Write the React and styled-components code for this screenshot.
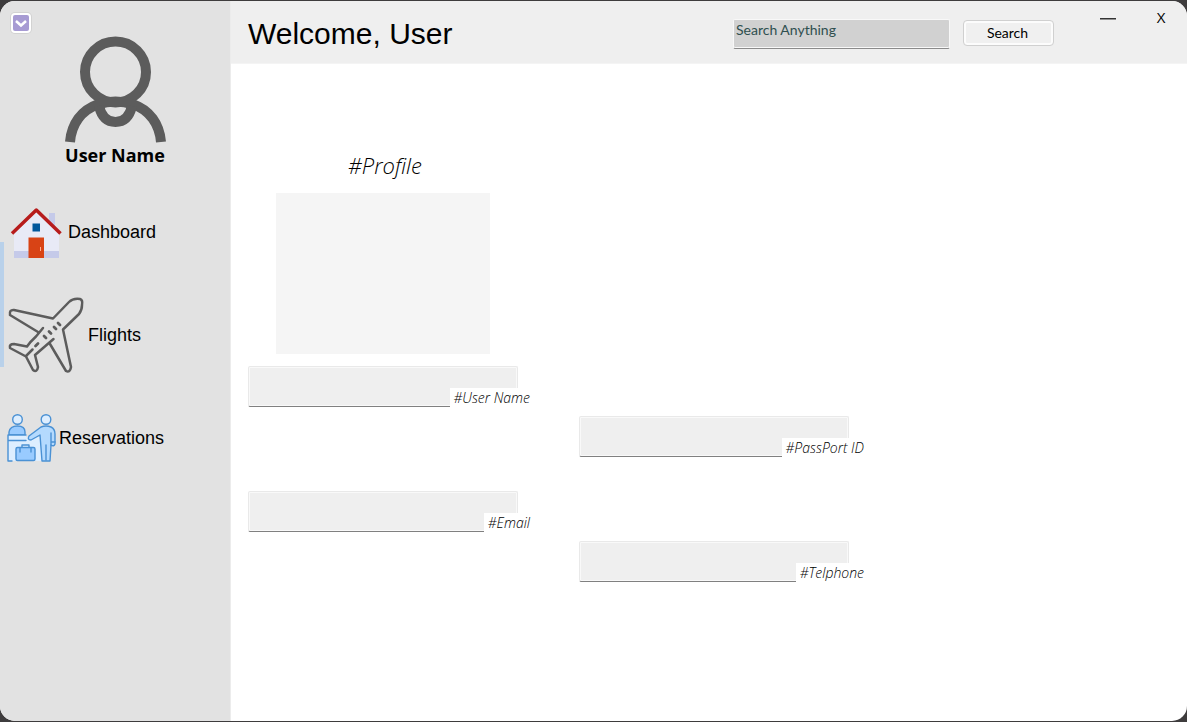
import React from "react";
import styled, { createGlobalStyle } from "styled-components";

const GlobalStyle = createGlobalStyle`
  * { box-sizing: border-box; }
  body {
    margin: 0;
    background: #3e3c3d;
    font-family: "Liberation Sans", Arial, sans-serif;
    color: #000;
  }
  button, input { font: inherit; color: inherit; }
`;

const Frame = styled.div`
  display: flex;
  min-height: 100vh;
  padding: 1px 0;
`;

const AppWindow = styled.div`
  display: flex;
  flex: 1;
  border-radius: 15px;
  overflow: hidden;
  background: #fff;
`;

const Sidebar = styled.aside`
  position: relative;
  flex: none;
  width: 231px;
  padding-top: 12px;
  background: #e2e2e2;
  border-right: 1px solid #ececec;
`;

const Toggle = styled.button`
  display: block;
  width: 20px;
  height: 20px;
  margin-left: 11px;
  padding: 0;
  background: #a79bd3;
  border: 2px solid #fff;
  border-radius: 4px;
  box-shadow: 0 0 0 1px #d2d2d2;
  svg { display: block; }
`;

const Account = styled.div`
  display: flex;
  flex-direction: column;
  align-items: center;
  padding-top: 2px;
  svg { display: block; }
`;

const AccountName = styled.div`
  font: bold 18px/24px "Open Sans", sans-serif;
`;

const Nav = styled.nav`
  display: flex;
  flex-direction: column;
  gap: 27px;
  margin-top: 27px;
`;

const NavItem = styled.a`
  display: flex;
  align-items: center;
  gap: 4px;
  height: 76px;
  padding-left: 8px;
  font-size: 18px;
  line-height: 20px;
  color: #000;
  text-decoration: none;
  svg { flex: none; overflow: visible; }
`;

const ActiveBar = styled.div`
  position: absolute;
  left: 0;
  top: 241px;
  width: 4px;
  height: 125px;
  background: #b9d1ea;
`;

const Main = styled.div`
  flex: 1;
  min-width: 0;
`;

const Header = styled.header`
  display: flex;
  align-items: flex-start;
  height: 63px;
  padding-left: 17px;
  background: #efefef;
  border-bottom: 1px solid #f4f4f4;
`;

const Title = styled.h1`
  flex: 1;
  margin: 0;
  padding-top: 16px;
  font-size: 30px;
  line-height: 34px;
  font-weight: 400;
`;

const SearchForm = styled.form`
  display: flex;
  gap: 13px;
  padding-top: 18px;
  font: 14px/18px Lato, sans-serif;
`;

const SearchInput = styled.input`
  width: 217px;
  height: 30px;
  padding: 0 2px 10px;
  background: #d1d1d1;
  border: 1px solid #f8f8f8;
  border-bottom-color: #8a8a8a;
  box-shadow: inset 0 -1px #f8f8f8;
  border-radius: 2px;
  outline: none;
  &::placeholder { color: #2f4f4f; opacity: 1; }
`;

const SearchButton = styled.button`
  width: 91px;
  height: 26px;
  margin-top: 1px;
  padding: 0 2px 0 0;
  background: #f0f0f0;
  border: 1px solid #d0d0d0;
  border-radius: 4px;
  box-shadow: inset 0 0 0 2px #fcfcfc;
`;

const WindowControls = styled.div`
  display: flex;
  gap: 21px;
  margin-left: 38px;
  padding: 2px 10px 0 0;
`;

const WindowButton = styled.button`
  width: 32px;
  height: 30px;
  padding: 0 0 2px;
  border: 0;
  background: none;
  font: 15px/28px "Open Sans", sans-serif;
  svg { display: block; margin: 4px auto 0; }
`;

const Content = styled.main`
  padding: 85px 17px 0;
`;

const Columns = styled.div`
  display: flex;
  gap: 61px;
`;

const Profile = styled.section`
  display: flex;
  flex-direction: column;
  align-items: center;
  width: 270px;
`;

const ProfileTitle = styled.h2`
  margin: 0;
  padding-left: 4px;
  font: italic 300 22px/32px "Open Sans", sans-serif;
`;

const Picture = styled.div`
  width: 214px;
  height: 161px;
  margin: 12px 0;
  background: #f5f5f5;
`;

const FieldColumn = styled.div`
  display: flex;
  flex-direction: column;
  gap: 84px;
  padding-top: ${(p) => (p.$lowered ? 50 : 0)}px;
`;

const FieldBox = styled.div`
  position: relative;
  width: 270px;
`;

const FieldInput = styled.input`
  display: block;
  width: 100%;
  height: 41px;
  padding: 0 6px;
  background: #efefef;
  border: 1px solid #e9e9e9;
  border-bottom-color: #808080;
  box-shadow: inset 0 0 0 1px #f9f9f9;
  border-radius: 2px;
  outline: none;
`;

const FieldLabel = styled.label`
  position: absolute;
  top: 22px;
  right: -${(p) => p.$overhang}px;
  padding: 0 4px;
  background: #fff;
  font: italic 300 14px/20px "Open Sans", sans-serif;
  white-space: nowrap;
`;

function Field({ id, label, overhang }) {
  return (
    <FieldBox>
      <FieldInput id={id} type="text" />
      <FieldLabel htmlFor={id} $overhang={overhang}>{label}</FieldLabel>
    </FieldBox>
  );
}

function UserIcon() {
  return (
    <svg width="102" height="108" viewBox="0 0 102 108" fill="none" stroke="#5c5c5c" strokeWidth="10">
      <circle cx="51.500" cy="37" r="30.5" />
      <path d="M6 107C7.500 89 17.500 75 33.500 69.500Q51.500 63.500 69.500 69.500C85.500 75 95.500 89 97 107" />
      <path d="M35 71C37.500 82 43.500 87 51.500 87S65.500 82 68 71" />
    </svg>
  );
}

function HouseIcon() {
  return (
    <svg width="56" height="52" viewBox="0 -1 56 52">
      <path fill="#c5cae9" d="M41 6h6v18h-6z" />
      <path fill="#e8eaf6" d="M28 5 6 25v26h45V25z" />
      <path fill="#c5cae9" d="M6 44h45v7H6z" />
      <path fill="#d84315" d="M20.500 30.500h15.500V51H20.500z" />
      <path fill="#01579b" d="M24.500 16.500h7.500v8h-7.500z" />
      <path fill="none" stroke="#b71c1c" strokeWidth="3.500" strokeLinejoin="round" d="m4 26.500 24.300-23.500L52.500 26.500" />
      <path stroke="#ffab91" d="M32.500 40v4" />
    </svg>
  );
}

function PlaneIcon() {
  return (
    <svg width="76" height="76" viewBox="0 0 76 76" fill="none" stroke="#5c5c5c" strokeWidth="2.500" strokeLinejoin="round" strokeLinecap="round">
      <path d="M35 31 28 39.500Q22 45 19 49.500L6 47Q1 47 2 51L18 59.500 25 73Q29 76 30 70L27 58 45.500 42" />
      <path d="M30 35 2 18Q1 12.500 6 13L45 21.500 61 5Q65 1 72 2 75 3 74 8 74 13 71 17L55 32.500 63 70Q62 76 58 74L42 47" />
      <path d="m18 59 6.500-6.500" />
      <path strokeWidth="2.800" d="m27.500 49 2.500-2.500M36 39l2 2M41 34.500l2 2M46 30l2 2M50 26l2 2" />
    </svg>
  );
}

function ReservationsIcon() {
  return (
    <svg width="47" height="50" viewBox="1 0 47 50" stroke="#4a91d4" strokeWidth="1.400" strokeLinejoin="round" strokeLinecap="round">
      <path fill="#ddeeff" stroke="none" d="M1 24h34v24H1z" />
      <circle fill="#ddeeff" cx="10.500" cy="6.500" r="4.800" />
      <path fill="#99cbff" d="M2 22v-3Q3 13 10.500 13T18 19v3z" />
      <path fill="#ddeeff" stroke="none" d="M1 22h18v5H1z" />
      <path fill="none" d="M5 48H1V22h18M1 27.500h18" />
      <circle fill="#ddeeff" cx="39" cy="6.500" r="4.800" />
      <path fill="#b4dafe" d="M22 23 34 14Q39 12 44 14 48 16 48 21v10q-1 3-4 1l-1 16h-8l-2-26-9 5q-4 0-2-4z" />
      <path fill="none" d="M44 20v12M39 32v15M45 29h3" />
      <path fill="none" d="M15 34v-2h7v2" />
      <rect fill="#99cbff" x="9" y="34.500" width="19" height="13" rx="1.500" />
      <path fill="none" d="M13 35v4M24 35v4" />
    </svg>
  );
}

export default function App() {
  return (
    <>
      <GlobalStyle />
      <Frame>
        <AppWindow>
          <Sidebar>
            <Toggle type="button" aria-label="Toggle menu">
              <svg width="16" height="16" viewBox="0 0 16 16" fill="none" stroke="#fff" strokeWidth="2.500">
                <path d="m3 6 5 4.500L13 6" />
              </svg>
            </Toggle>
            <Account>
              <UserIcon />
              <AccountName>User Name</AccountName>
            </Account>
            <Nav>
              <NavItem href="#dashboard"><HouseIcon />Dashboard</NavItem>
              <NavItem href="#flights"><PlaneIcon />Flights</NavItem>
              <NavItem href="#reservations"><ReservationsIcon />Reservations</NavItem>
            </Nav>
            <ActiveBar />
          </Sidebar>
          <Main>
            <Header>
              <Title>Welcome, User</Title>
              <SearchForm onSubmit={(e) => e.preventDefault()}>
                <SearchInput type="text" aria-label="Search" placeholder="Search Anything" />
                <SearchButton type="submit">Search</SearchButton>
              </SearchForm>
              <WindowControls>
                <WindowButton type="button" aria-label="Minimize">
                  <svg width="16" height="2" viewBox="0 0 16 2"><path fill="#333" d="M0 0h16v1.500H0z" /></svg>
                </WindowButton>
                <WindowButton type="button" aria-label="Close">X</WindowButton>
              </WindowControls>
            </Header>
            <Content>
              <Columns>
                <Profile>
                  <ProfileTitle>#Profile</ProfileTitle>
                  <Picture />
                </Profile>
              </Columns>
              <Columns>
                <FieldColumn>
                  <Field id="user-name" label="#User Name" overhang={16} />
                  <Field id="email" label="#Email" overhang={16} />
                </FieldColumn>
                <FieldColumn $lowered>
                  <Field id="passport" label="#PassPort ID" overhang={19} />
                  <Field id="telephone" label="#Telphone" overhang={19} />
                </FieldColumn>
              </Columns>
            </Content>
          </Main>
        </AppWindow>
      </Frame>
    </>
  );
}
